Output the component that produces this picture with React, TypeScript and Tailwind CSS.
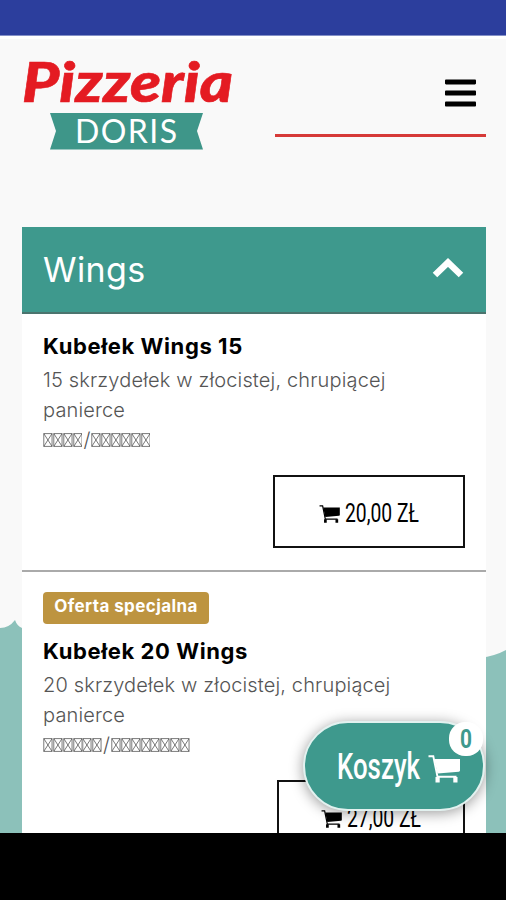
import { FaBars } from 'react-icons/fa';

type Item = {
  id: number;
  name: string;
  description: string;
  size: [number, number];
  price: string;
  special?: boolean;
};

const ITEMS: Item[] = [
  { id: 1, name: 'Kubełek Wings 15', description: '15 skrzydełek w złocistej, chrupiącej panierce', size: [4, 6], price: '20,00 ZŁ' },
  { id: 2, name: 'Kubełek 20 Wings', description: '20 skrzydełek w złocistej, chrupiącej panierce', size: [6, 8], price: '27,00 ZŁ', special: true },
];

function Cart({ className }: { className?: string }) {
  return (
    <svg viewBox="0 0 32 28" className={className} aria-hidden="true">
      <path d="M6.200 4H32v11.500q0 1-1.200 1.200L9.500 18.500z" fill="currentColor" />
      <path d="M.5 1.300h4.800l4.200 20.500h19" fill="none" stroke="currentColor" strokeWidth="1.900" />
      <path d="M7.500 22h4.200v5.500H7.500zM25.300 22h4.200v5.500h-4.200z" fill="currentColor" />
    </svg>
  );
}

function Logo() {
  return (
    <svg width="216" height="115" viewBox="0 0 216 115" className="block shrink-0">
      <text x="1" y="59" textLength="211" lengthAdjust="spacingAndGlyphs" fill="#e41b22" stroke="#e41b22" strokeWidth="0.6" className="font-['Lato',sans-serif] text-[56px] font-black italic">Pizzeria</text>
      <path d="M29 70h153l-6 18 6 18.500H29L35 88z" fill="#3e9689" />
      <text x="54" y="99.500" textLength="102" lengthAdjust="spacing" fill="#fff" className="font-['Lato',sans-serif] text-[32px]">DORIS</text>
    </svg>
  );
}

function EmptyGlyphs({ count }: { count: number }) {
  return (
    <span className="flex">
      {Array.from({ length: count }, (_, i) => (
        <svg key={i} width="9.850" height="14" viewBox="0 0 10 14" fill="none" stroke="#555" strokeWidth="0.8">
          <path d="M.8.500h8.400v13H.8zM.8.500l8.400 13M9.200.500L.8 13.500" />
        </svg>
      ))}
    </span>
  );
}

function MenuItem({ item }: { item: Item }) {
  return (
    <li className={`px-[21px] ${item.special ? 'pt-5' : 'h-[258px] border-b-2 border-[#aaa] pt-[17px]'}`}>
      {item.special && (
        <span className="mb-[12px] flex h-8 w-[166px] items-center justify-center rounded-[4px] bg-[#bd9440] pb-[2px] text-[17px] font-bold tracking-[0.4px] whitespace-nowrap text-white">
          Oferta specjalna
        </span>
      )}
      <h3 className="h-[30px] text-[22px] leading-[30px] font-bold tracking-[0.6px] whitespace-nowrap text-black">{item.name}</h3>
      <p className="mt-[5px] w-[370px] text-[20px] leading-[29.500px] font-light tracking-[0.15px] text-[#555]">{item.description}</p>
      <div className="flex h-[29px] items-center text-[20px] font-light text-[#555]">
        <EmptyGlyphs count={item.size[0]} />
        <span className="w-[9px] text-center">/</span>
        <EmptyGlyphs count={item.size[1]} />
      </div>
      <div className={`flex justify-end ${item.special ? 'mt-[21px]' : 'mt-[21px]'}`}>
        <button className={`flex h-[73px] items-center justify-center gap-[5px] border-2 border-[#111] text-black ${item.special ? 'w-[188px]' : 'w-[192px]'}`}>
          <Cart className="mt-[5px] h-[18px] w-[21px]" />
          <svg width="80" height="44" className="-mr-[6px] block overflow-visible">
            <text x="0" y="32" textLength="74" lengthAdjust="spacingAndGlyphs" fill="currentColor" className="font-['Roboto',sans-serif] text-[25px] font-normal">{item.price}</text>
          </svg>
        </button>
      </div>
    </li>
  );
}

function BasketButton() {
  return (
    <button className="absolute top-[721px] left-[303px] flex h-[90px] w-[182px] items-center rounded-[45px] border-2 border-[#e2f1ef] bg-[#3e998d] pl-8 text-white shadow-[0_2px_14px_rgba(0,0,0,0.4)]">
      <svg width="88" height="60" className="block shrink-0 overflow-visible">
        <text x="0" y="43" textLength="83" lengthAdjust="spacingAndGlyphs" fill="currentColor" className="font-['Roboto',sans-serif] text-[37px] font-medium">Koszyk</text>
      </svg>
      <Cart className="mt-[5px] ml-[3px] h-[28px] w-[32px]" />
      <span className="absolute -top-[1px] right-0 flex h-[34px] w-[34px] items-center justify-center rounded-[16px] bg-white text-[#3e998d]">
        <svg width="16" height="34" className="block overflow-visible">
          <text x="2" y="26" textLength="12" lengthAdjust="spacingAndGlyphs" fill="currentColor" className="font-['Roboto',sans-serif] text-[26px] font-bold">0</text>
        </svg>
      </span>
    </button>
  );
}

export default function App() {
  return (
    <div className="relative flex h-[900px] w-[506px] flex-col overflow-hidden bg-[#f9f9f9] font-['Inter','Open_Sans',sans-serif]">
      <div className="h-9 shrink-0 border-b border-[#8490c8] bg-[#2c3e9d]" />
      <header className="flex h-[191px] shrink-0 items-start border-t-3 border-white px-[21px] pt-[4px]">
        <Logo />
        <div className="mt-[15px] ml-[38px] flex h-[79px] w-[211px] shrink-0 flex-col items-end border-b-3 border-[#d63a38] pr-[10px]">
          <FaBars className="mt-[17px] h-[36px] w-[31px]" />
        </div>
      </header>

      <main className="relative h-[606px] shrink-0 overflow-hidden pr-[20px] pl-[22px]">
        {/* wavy page background behind the card */}
        <svg width="506" height="213" viewBox="0 0 506 213" className="absolute bottom-0 left-0">
          <path d="M0 8q9 0 15-8q2 6 7 8L480 38q15-2 26-8v183H0z" fill="#8cc1ba" />
        </svg>
        <section className="relative h-full bg-white">
          <div className="flex h-[87px] items-center justify-between border-b-2 border-[#4b746e] bg-[#3e998d] pr-[22px] pl-[21px] text-white">
            <h2 className="text-[34px] font-normal tracking-[0.4px]">Wings</h2>
            <svg width="32" height="22" viewBox="0 0 32 22" className="mb-[4px]" fill="none" stroke="currentColor" strokeWidth="6.500" strokeLinejoin="miter">
              <path d="M3 18L16 5.500 29 18" />
            </svg>
          </div>
          <ul>
            {ITEMS.map((item) => (
              <MenuItem key={item.id} item={item} />
            ))}
          </ul>
        </section>
      </main>

      <BasketButton />
      <footer className="h-[67px] shrink-0 bg-black" />
    </div>
  );
}
